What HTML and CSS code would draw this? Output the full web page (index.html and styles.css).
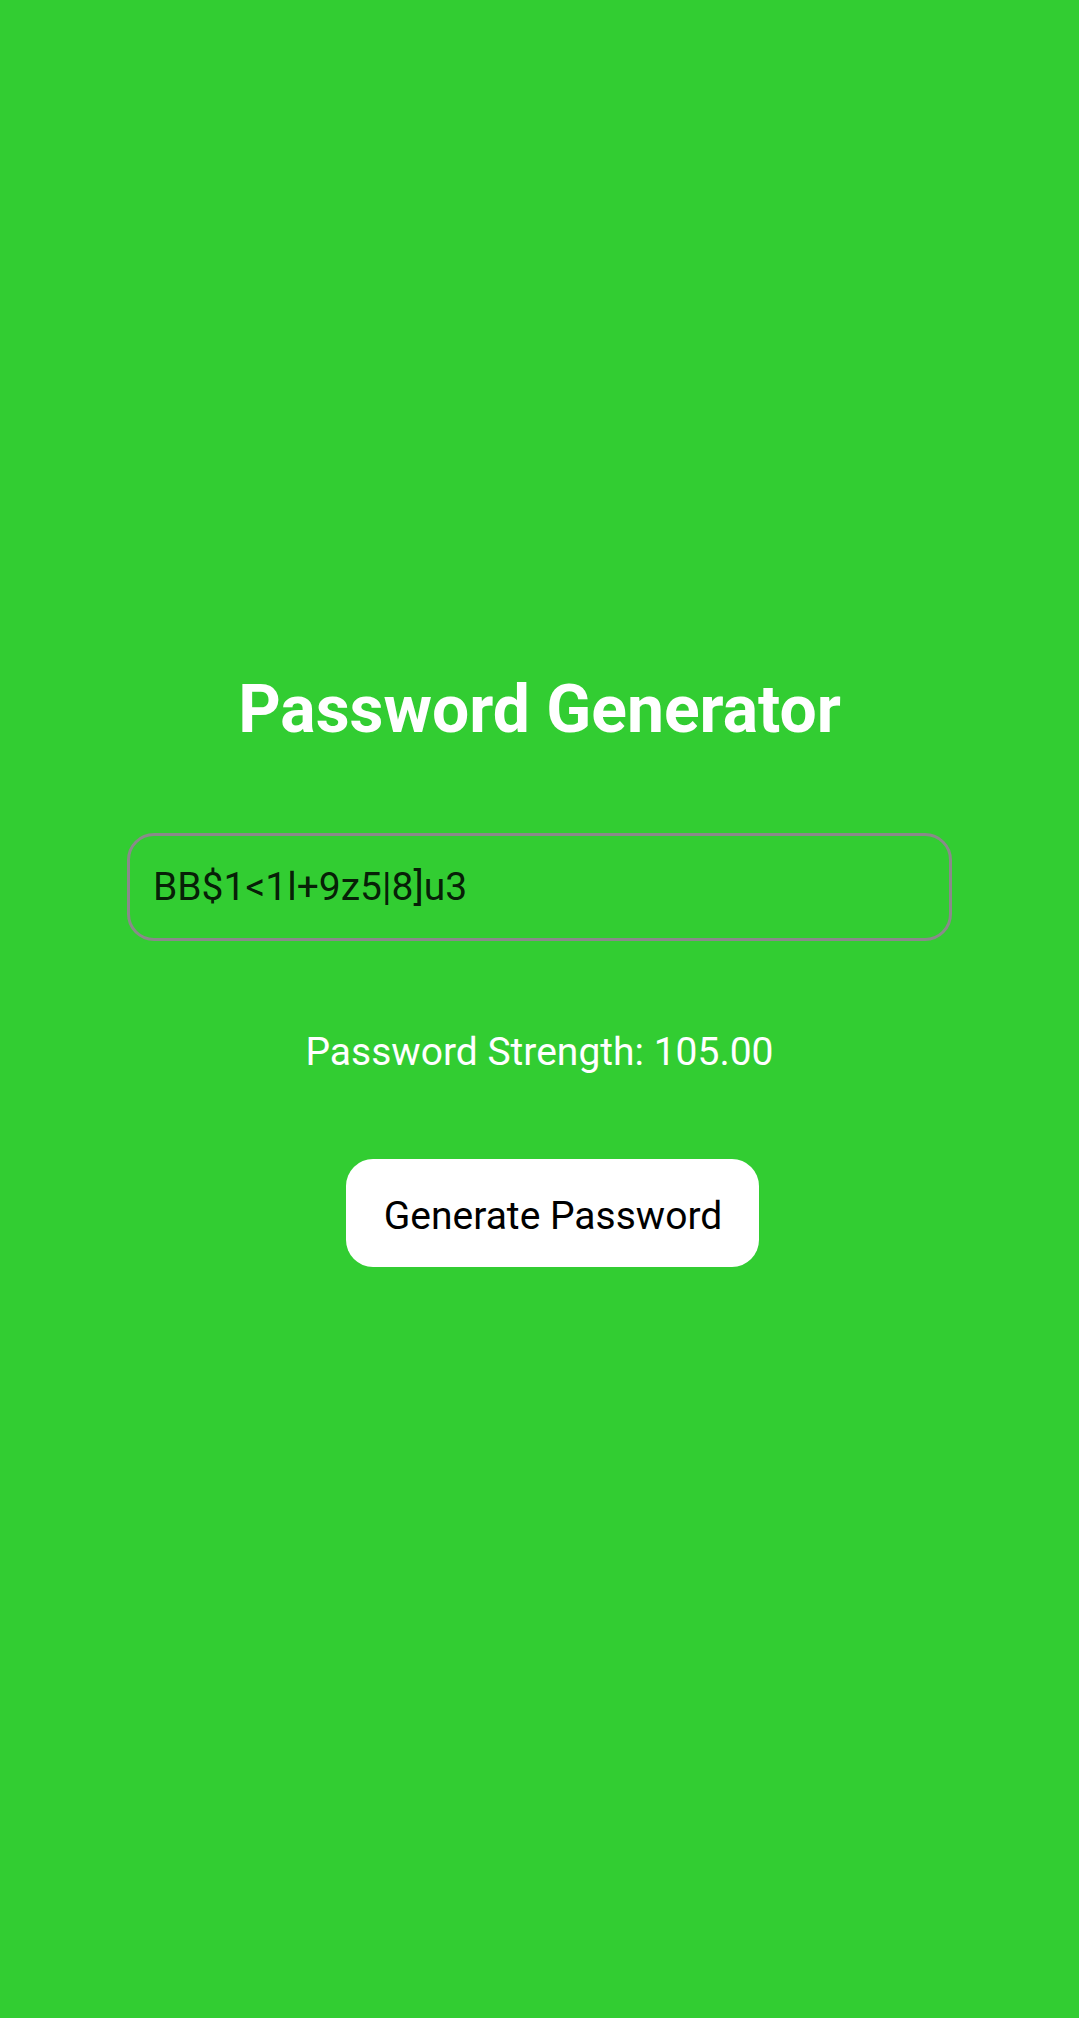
FILE: index.html
```html
<!DOCTYPE html>
<html lang="en">
<head>
<meta charset="utf-8">
<title>Password Generator</title>
<link rel="stylesheet" href="styles.css">
</head>
<body>
<main class="app">
  <h1 class="title">Password Generator</h1>
  <div class="field">
    <input class="password" type="text" value="BB$1&lt;1l+9z5|8]u3" readonly>
  </div>
  <p class="strength">Password Strength: 105.00</p>
  <button class="generate" type="button">Generate Password</button>
</main>
</body>
</html>
```

FILE: styles.css
```css
html, body {
  margin: 0;
  padding: 0;
  background: #32cd32;
  height: 100%;
}

body {
  font-family: Roboto, "Noto Sans", sans-serif;
}

.app {
  display: flex;
  flex-direction: column;
  align-items: center;
  padding-top: 671px;
}

.title {
  margin: 0;
  font-size: 66px;
  line-height: 77px;
  font-weight: 700;
  color: #ffffff;
}

.field {
  margin-top: 85px;
  width: 825px;
}

.password {
  box-sizing: border-box;
  display: block;
  width: 100%;
  height: 108px;
  border: 3px solid #8a8a8a;
  border-radius: 27px;
  background: transparent;
  padding: 0 23px;
  font-family: Roboto, "Noto Sans", sans-serif;
  font-size: 39px;
  color: rgba(0, 0, 0, 0.87);
  outline: none;
}

.strength {
  margin: 88px 0 0;
  font-size: 39px;
  line-height: 46px;
  color: #ffffff;
}

.generate {
  margin-top: 84px;
  margin-left: 26px;
  box-sizing: border-box;
  height: 108px;
  padding: 5px 37px 0 38px;
  border: none;
  border-radius: 27px;
  background: #ffffff;
  color: #000000;
  font-family: Roboto, "Noto Sans", sans-serif;
  font-size: 39px;
  cursor: pointer;
}
```
